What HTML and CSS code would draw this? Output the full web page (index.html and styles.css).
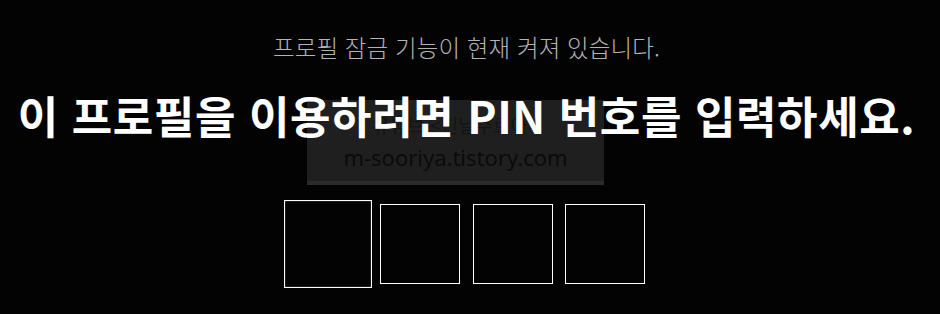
FILE: index.html
```html
<!DOCTYPE html>
<html lang="ko">
<head>
<meta charset="utf-8">
<title>프로필 잠금</title>
<link rel="stylesheet" href="styles.css">
</head>
<body>
<div class="page">
  <div class="watermark">
    <div class="wm-line wm-top">유튜브 &lt;빈날주르아&gt;</div>
    <div class="wm-line wm-url">m-sooriya.tistory.com</div>
  </div>
  <div class="lock">
    <p class="status">프로필 잠금 기능이 현재 켜져 있습니다.</p>
    <h1 class="prompt">이 프로필을 이용하려면 PIN 번호를 입력하세요.</h1>
    <div class="pins">
      <div class="pin pin-focused"></div>
      <div class="pin"></div>
      <div class="pin"></div>
      <div class="pin"></div>
    </div>
  </div>
</div>
</body>
</html>
```
FILE: styles.css
```css
html, body {
  margin: 0;
  padding: 0;
  background: #030303;
}
body {
  width: 940px;
  height: 314px;
  overflow: hidden;
  font-family: "Noto Sans CJK KR", "Noto Sans", sans-serif;
}
.page {
  position: relative;
  width: 940px;
  height: 314px;
  box-sizing: border-box;
  padding: 31px 7px 0 0;
}
.lock {
  position: relative;
  z-index: 1;
  display: flex;
  flex-direction: column;
  align-items: center;
}
.status {
  margin: 0;
  font-size: 23.5px;
  line-height: 33px;
  font-weight: 300;
  letter-spacing: 0.1px;
  color: #b3b3b3;
  white-space: nowrap;
}
.prompt {
  margin: 25px 0 0;
  font-size: 44px;
  line-height: 52px;
  font-weight: 700;
  letter-spacing: 0.6px;
  color: #ffffff;
  white-space: nowrap;
}
.pins {
  display: flex;
  gap: 12.33px;
  margin-top: 63px;
}
.pin {
  width: 80px;
  height: 80px;
  box-sizing: border-box;
  border: 1px solid #ffffff;
  background: #030303;
}
.pin-focused {
  transform: scale(1.1);
}
.watermark {
  position: absolute;
  left: 307px;
  top: 100px;
  width: 297px;
  height: 81px;
  background: #1f1f1f;
  border-bottom: 4px solid #2b2b2b;
  display: flex;
  flex-direction: column;
  align-items: center;
  justify-content: center;
  gap: 2px;
  color: #0d0d0d;
}
.wm-line {
  white-space: nowrap;
  line-height: 30px;
}
.wm-top {
  font-size: 19px;
  color: #141414;
}
.wm-url {
  font-family: "Noto Sans", sans-serif;
  font-size: 22px;
  color: #0b0b0b;
}
```
